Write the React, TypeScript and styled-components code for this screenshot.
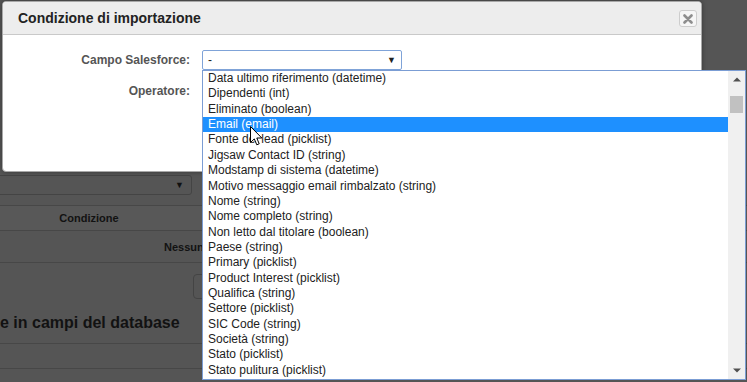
import React from "react";
import styled, { createGlobalStyle } from "styled-components";

const Global = createGlobalStyle`
  html, body { margin: 0; padding: 0; }
  body {
    background: #555;
    font-family: "Liberation Sans", Arial, sans-serif;
    width: 747px;
    height: 382px;
    overflow: hidden;
  }
`;

const Screen = styled.div`
  position: relative;
  width: 747px;
  height: 382px;
  overflow: hidden;
  background: #555;
`;

/* ---------- dimmed page behind the modal ---------- */
const Page = styled.div`
  display: flex;
  flex-direction: column;
  padding-top: 175px;
  box-sizing: border-box;
  height: 100%;
  color: #121212;
`;

const PageSelect = styled.div`
  margin-left: -20px;
  width: 212px;
  height: 20px;
  box-sizing: border-box;
  border: 1px solid #444;
  border-radius: 3px;
  display: flex;
  align-items: center;
  justify-content: flex-end;
  padding-right: 7px;
  font-size: 9px;
  color: #111;
`;

const TableHead = styled.div`
  margin-top: 10px;
  height: 26px;
  box-sizing: border-box;
  border-top: 1px solid #474747;
  border-bottom: 1px solid #474747;
  background: #585858;
  display: flex;
  align-items: center;
`;

const HeadCell = styled.div<{ $w: number }>`
  width: ${(p) => p.$w}px;
  text-align: center;
  font-weight: bold;
  font-size: 11px;
`;

const TableRow = styled.div`
  height: 32px;
  box-sizing: border-box;
  border-bottom: 1px solid #474747;
  display: flex;
  align-items: center;
  padding-left: 164px;
  font-weight: bold;
  font-size: 11px;
`;

const PageButton = styled.div`
  margin-top: 11px;
  margin-left: 193px;
  width: 60px;
  height: 25px;
  box-sizing: border-box;
  border: 1px solid #444;
  border-radius: 4px;
`;

const PageHeading = styled.h3`
  margin: 13px 0 0 0;
  font-size: 16px;
  line-height: 22px;
  font-weight: bold;
`;

const PageLine = styled.div<{ $h: number }>`
  height: ${(p) => p.$h}px;
  box-sizing: border-box;
  border-bottom: 1px solid #474747;
`;

/* ---------- modal dialog ---------- */
const Dialog = styled.div`
  position: absolute;
  left: 2px;
  top: 1px;
  width: 700px;
  height: 171px;
  box-sizing: border-box;
  background: #fff;
  border: 1px solid #a8a8a8;
  border-radius: 4px;
  overflow: hidden;
  box-shadow: 0 0 5px rgba(0, 0, 0, 0.35);
`;

const Header = styled.div`
  height: 33px;
  box-sizing: border-box;
  background: #ededed;
  border-bottom: 1px solid #c9c9c9;
  display: flex;
  align-items: center;
  justify-content: space-between;
  padding: 0 4px 0 15px;
`;

const Title = styled.div`
  font-weight: bold;
  font-size: 14px;
  color: #222;
`;

const CloseButton = styled.div`
  width: 18px;
  height: 17px;
  box-sizing: border-box;
  border: 1px solid #cdcdcd;
  border-radius: 3px;
  background: #f6f6f6;
  display: flex;
  align-items: center;
  justify-content: center;
  margin-top: 1px;
`;

const Form = styled.div`
  display: grid;
  grid-template-columns: 187px 200px;
  column-gap: 12px;
  row-gap: 11px;
  padding-top: 15px;
`;

const Label = styled.div`
  height: 20px;
  display: flex;
  align-items: center;
  justify-content: flex-end;
  font-weight: bold;
  font-size: 12px;
  color: #555;
`;

const Select = styled.div`
  height: 20px;
  box-sizing: border-box;
  border: 1px solid #7fa3d8;
  border-radius: 2px;
  display: flex;
  align-items: center;
  justify-content: space-between;
  padding: 0 5px 0 5px;
  font-size: 12px;
  color: #222;
`;

const Arrow = styled.span`
  font-size: 9px;
  color: #222;
`;

/* ---------- open dropdown list ---------- */
const List = styled.div`
  position: absolute;
  left: 202px;
  top: 70px;
  width: 544px;
  height: 310px;
  box-sizing: border-box;
  border: 1px solid #7b9dd4;
  background: #fff;
  display: flex;
`;

const Items = styled.div`
  flex: 1;
  overflow: hidden;
`;

const Item = styled.div<{ $active?: boolean }>`
  height: 15.37px;
  line-height: 15.37px;
  padding-left: 5px;
  font-size: 12px;
  white-space: nowrap;
  color: ${(p) => (p.$active ? "#fff" : "#222")};
  background: ${(p) => (p.$active ? "#1e90ff" : "transparent")};
`;

const Scrollbar = styled.div`
  width: 17px;
  background: #f0f0f0;
  display: flex;
  flex-direction: column;
`;

const ScrollBtn = styled.div`
  height: 17px;
  display: flex;
  align-items: center;
  justify-content: center;
`;

const Track = styled.div`
  flex: 1;
  display: flex;
  flex-direction: column;
  align-items: center;
`;

const Thumb = styled.div`
  margin-top: 8px;
  width: 13px;
  height: 17px;
  background: #c1c1c1;
`;

const Cursor = styled.svg`
  position: absolute;
  left: 250px;
  top: 126px;
`;

const items = [
  "Data ultimo riferimento (datetime)",
  "Dipendenti (int)",
  "Eliminato (boolean)",
  "Email (email)",
  "Fonte del lead (picklist)",
  "Jigsaw Contact ID (string)",
  "Modstamp di sistema (datetime)",
  "Motivo messaggio email rimbalzato (string)",
  "Nome (string)",
  "Nome completo (string)",
  "Non letto dal titolare (boolean)",
  "Paese (string)",
  "Primary (picklist)",
  "Product Interest (picklist)",
  "Qualifica (string)",
  "Settore (picklist)",
  "SIC Code (string)",
  "Società (string)",
  "Stato (picklist)",
  "Stato pulitura (picklist)",
];

export default function App() {
  return (
    <Screen>
      <Global />
      <Page>
        <PageSelect>▼</PageSelect>
        <TableHead>
          <HeadCell $w={178}>Condizione</HeadCell>
        </TableHead>
        <TableRow>Nessuna</TableRow>
        <PageButton />
        <PageHeading>e in campi del database</PageHeading>
        <PageLine $h={10} />
        <PageLine $h={25} />
      </Page>

      <Dialog>
        <Header>
          <Title>Condizione di importazione</Title>
          <CloseButton>
            <svg width="10" height="10" viewBox="0 0 10 10">
              <path d="M1.5 1.5 L8.5 8.5 M8.5 1.5 L1.5 8.5" stroke="#8e8e8e" strokeWidth="2.6" strokeLinecap="round" />
            </svg>
          </CloseButton>
        </Header>
        <Form>
          <Label>Campo Salesforce:</Label>
          <Select>
            <span>-</span>
            <Arrow>▼</Arrow>
          </Select>
          <Label>Operatore:</Label>
          <Select />
        </Form>
      </Dialog>

      <List>
        <Items>
          {items.map((t, i) => (
            <Item key={t} $active={i === 3}>
              {t}
            </Item>
          ))}
        </Items>
        <Scrollbar>
          <ScrollBtn>
            <svg width="8" height="5" viewBox="0 0 8 5">
              <path d="M0 4.5 L4 0.5 L8 4.5 Z" fill="#505050" />
            </svg>
          </ScrollBtn>
          <Track>
            <Thumb />
          </Track>
          <ScrollBtn>
            <svg width="8" height="5" viewBox="0 0 8 5">
              <path d="M0 0.5 L4 4.5 L8 0.5 Z" fill="#505050" />
            </svg>
          </ScrollBtn>
        </Scrollbar>
      </List>

      <Cursor width="13" height="20" viewBox="0 0 13 20">
        <path
          d="M0.5 0.5 L0.5 16.5 L4.3 12.9 L6.8 18.8 L9.2 17.8 L6.8 12 L11.8 12 Z"
          fill="#fff"
          stroke="#000"
          strokeWidth="1"
          strokeLinejoin="miter"
        />
      </Cursor>
    </Screen>
  );
}
